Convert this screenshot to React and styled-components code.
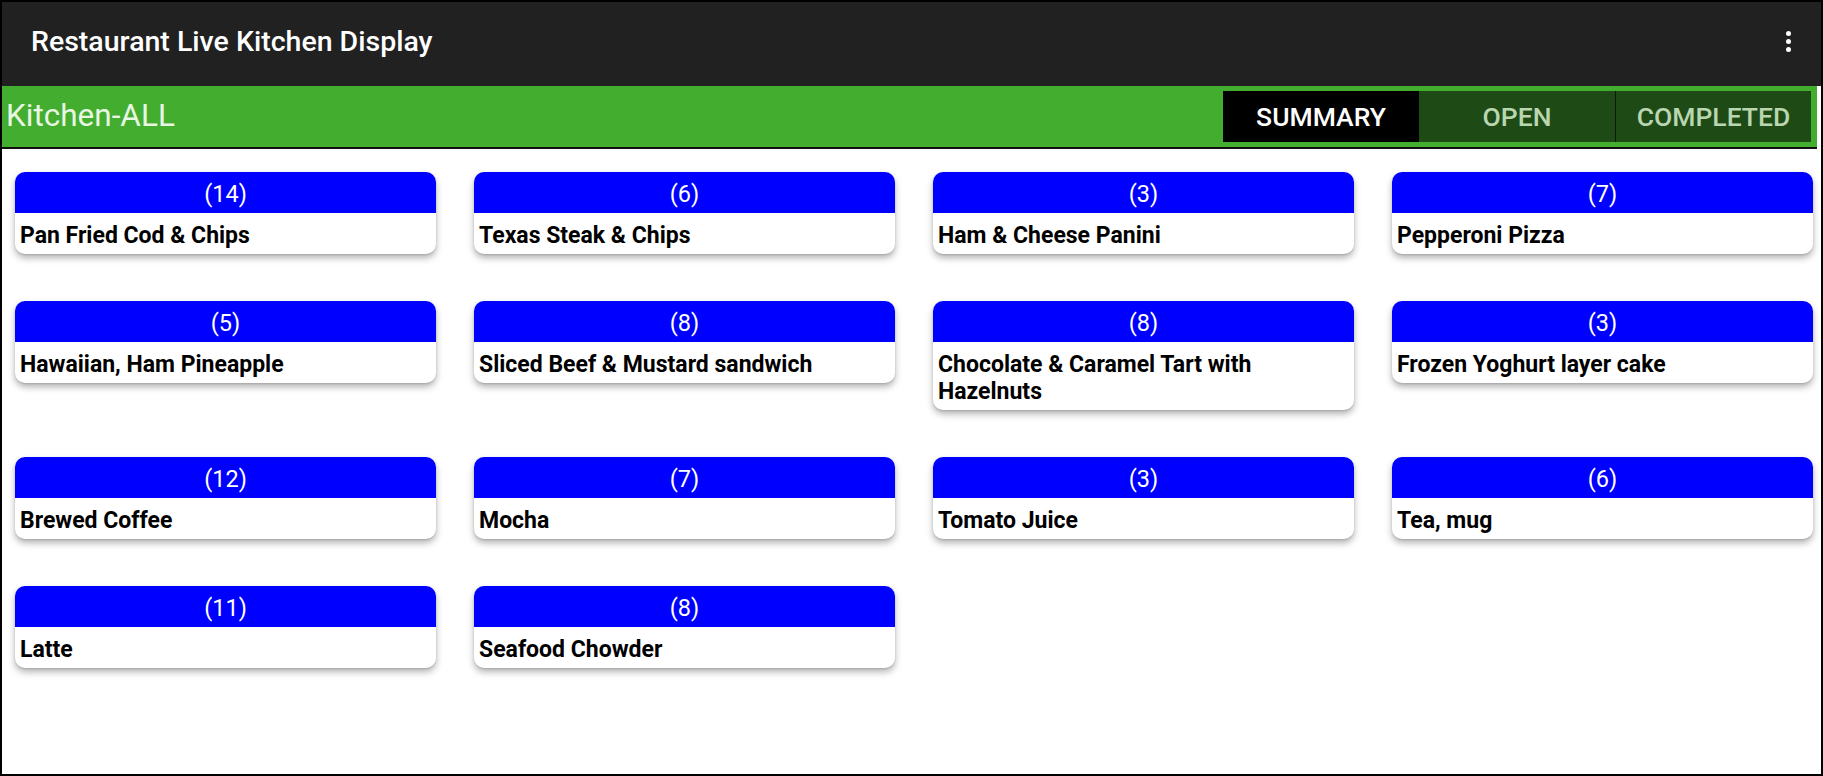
import React from "react";
import styled, { createGlobalStyle } from "styled-components";

const GlobalStyle = createGlobalStyle`
  html, body {
    margin: 0;
    padding: 0;
    background: #fff;
    font-family: Roboto, "Liberation Sans", Arial, sans-serif;
  }
  * {
    box-sizing: border-box;
  }
`;

const Screen = styled.div`
  width: 100%;
  height: 100vh;
  border: 2px solid #000;
  display: flex;
  flex-direction: column;
  background: #fff;
  overflow: hidden;
`;

const AppBar = styled.header`
  height: 84px;
  flex-shrink: 0;
  background: #212121;
  display: flex;
  align-items: center;
  justify-content: space-between;
  padding: 0 28px 0 29px;
`;

const Title = styled.h1`
  margin: 0;
  color: #fff;
  font-size: 28.5px;
  font-weight: 500;
  padding-bottom: 5px;
`;

const MenuButton = styled.button`
  background: none;
  border: 0;
  padding: 0;
  width: 10px;
  display: flex;
  flex-direction: column;
  align-items: center;
  gap: 3px;
  cursor: pointer;
  margin-bottom: 6px;

  span {
    width: 5px;
    height: 5px;
    border-radius: 50%;
    background: #fff;
  }
`;

const StationBar = styled.div`
  height: 63px;
  flex-shrink: 0;
  margin-right: 4px;
  background: #43ad2f;
  border-bottom: 2px solid #111;
  display: flex;
  align-items: center;
  justify-content: space-between;
  padding: 0 6px 0 4px;
`;

const StationName = styled.div`
  color: #e9f6e4;
  font-size: 31.5px;
  font-weight: 400;
  padding-bottom: 2px;
`;

const Tabs = styled.nav`
  display: flex;
  height: 51px;
`;

const Tab = styled.button`
  width: 196px;
  height: 100%;
  border: 0;
  border-left: ${(p) => (p.divided ? "1px solid #0c1a08" : "0")};
  background: ${(p) => (p.active ? "#000" : "#1e4a15")};
  color: ${(p) => (p.active ? "#fff" : "#b9d6b0")};
  font-family: inherit;
  font-size: 26.5px;
  font-weight: 500;
  text-transform: uppercase;
  cursor: pointer;
  padding: 0;
`;

const Board = styled.main`
  flex: 1;
  display: grid;
  grid-template-columns: repeat(4, 1fr);
  column-gap: 38px;
  row-gap: 47px;
  align-items: start;
  align-content: start;
  padding: 23px 8px 0 13px;
`;

const Card = styled.div`
  background: #fff;
  border-radius: 10px;
  overflow: hidden;
  box-shadow: 0 4px 7px rgba(0, 0, 0, 0.3), 0 1px 2px rgba(0, 0, 0, 0.12);
`;

const Count = styled.div`
  height: 41px;
  background: #0000ff;
  color: #fff;
  font-size: 23.5px;
  font-weight: 400;
  display: flex;
  align-items: center;
  justify-content: center;
  padding-top: 3px;
`;

const ItemName = styled.div`
  padding: 9px 6px 5px 5px;
  color: #000;
  font-size: 23px;
  font-weight: 700;
  line-height: 27px;
`;

const items = [
  { count: 14, name: "Pan Fried Cod & Chips" },
  { count: 6, name: "Texas Steak & Chips" },
  { count: 3, name: "Ham & Cheese Panini" },
  { count: 7, name: "Pepperoni Pizza" },
  { count: 5, name: "Hawaiian, Ham Pineapple" },
  { count: 8, name: "Sliced Beef & Mustard sandwich" },
  { count: 8, name: "Chocolate & Caramel Tart with Hazelnuts" },
  { count: 3, name: "Frozen Yoghurt layer cake" },
  { count: 12, name: "Brewed Coffee" },
  { count: 7, name: "Mocha" },
  { count: 3, name: "Tomato Juice" },
  { count: 6, name: "Tea, mug" },
  { count: 11, name: "Latte" },
  { count: 8, name: "Seafood Chowder" },
];

const App = () => {
  return (
    <>
      <GlobalStyle />
      <Screen>
        <AppBar>
          <Title>Restaurant Live Kitchen Display</Title>
          <MenuButton aria-label="More options">
            <span />
            <span />
            <span />
          </MenuButton>
        </AppBar>
        <StationBar>
          <StationName>Kitchen-ALL</StationName>
          <Tabs>
            <Tab active>Summary</Tab>
            <Tab>Open</Tab>
            <Tab divided>Completed</Tab>
          </Tabs>
        </StationBar>
        <Board>
          {items.map((item, i) => (
            <Card key={i}>
              <Count>({item.count})</Count>
              <ItemName>{item.name}</ItemName>
            </Card>
          ))}
        </Board>
      </Screen>
    </>
  );
};

export default App;
